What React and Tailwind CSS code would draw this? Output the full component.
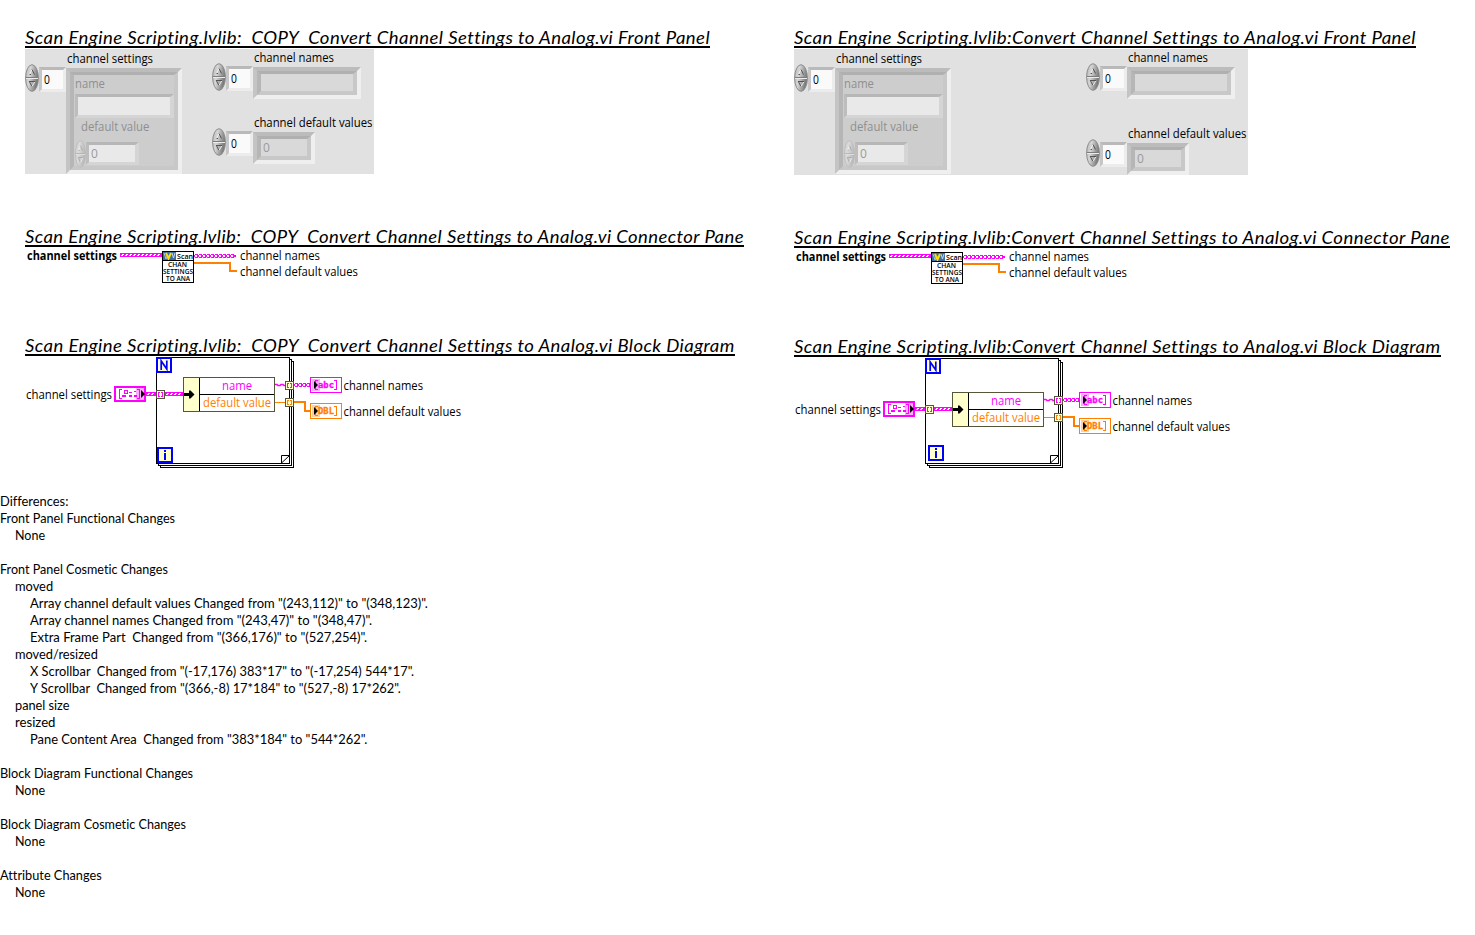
import { useLayoutEffect, useRef } from "react";

const SANS = "font-['Open_Sans','Noto_Sans',sans-serif]";
const LATO = "font-['Lato',sans-serif]";

// Text squeezed or stretched horizontally to an exact width.
function Fit({ w, className = "", children }) {
  const ref = useRef(null);
  useLayoutEffect(() => {
    const el = ref.current;
    el.style.transform = "none";
    el.style.transform = `scaleX(${w / el.offsetWidth})`;
  }, [w]);
  return (
    <span
      ref={ref}
      className={`inline-block w-max origin-left whitespace-pre [font-variant-ligatures:none] ${className}`}
    >
      {children}
    </span>
  );
}

function Heading({ w, children }) {
  return (
    <h2
      className={`h-5 overflow-hidden border-b-2 border-black text-[18px] italic leading-[19px] tracking-[0.4px] text-black ${LATO}`}
      style={{ width: w }}
    >
      <Fit w={w}>{children}</Fit>
    </h2>
  );
}

function Label({ w, className = "", children }) {
  return (
    <div className={`text-[12px] ${SANS} ${className}`}>
      <Fit w={w}>{children}</Fit>
    </div>
  );
}

function Spinner({ className = "", dim }) {
  const id = dim ? "spin-dim" : "spin";
  const dark = dim ? "#a8a8a8" : "#555";
  return (
    <svg
      className={`h-7 shrink-0 ${className}`}
      viewBox="0 0 14 28"
      preserveAspectRatio="none"
    >
      <defs>
        <linearGradient id={id} x1="0" y1="0" x2="1" y2="0.3">
          <stop offset="0" stopColor={dim ? "#d2d2d2" : "#b4b4b4"} />
          <stop offset="0.4" stopColor={dim ? "#dadada" : "#d6d6d6"} />
          <stop offset="1" stopColor={dim ? "#b8b8b8" : "#777"} />
        </linearGradient>
      </defs>
      <ellipse cx="7" cy="14" rx="6.4" ry="13.3" fill={`url(#${id})`} stroke={dim ? "#bdbdbd" : "#8c8c8c"} strokeWidth="1" />
      <path d="M1 13.5h12" stroke={dim ? "#b4b4b4" : "#7c7c7c"} />
      <path d="M1 14.5h12" stroke={dim ? "#dedede" : "#ececec"} />
      <path d="M4.500 10.500L7 5.500" stroke="#eee" fill="none" />
      <path d="M7 5.500l2.500 5M4.500 10.500h1.500" stroke={dark} fill="none" />
      <path d="M4 17.500h6M4.300 17.500L7 22.500" stroke={dark} fill="none" />
      <path d="M9.700 18L7 22.500" stroke="#eee" fill="none" />
    </svg>
  );
}

function IndexBox({ className }) {
  return (
    <div className={`h-[25px] w-[27px] shrink-0 border-[3px] border-b-[#ececec] border-l-[#c6c6c6] border-r-[#ececec] border-t-[#b9b9b9] bg-[#fafafa] pl-0.5 ${className}`}>
      <Label w={6} className="leading-[19px] text-black">0</Label>
    </div>
  );
}

// Sunken array shell: an outer bevel round a second, darker one.
function ArrayShell({ className, inner, children }) {
  return (
    <div className={`flex border-4 border-b-[#efefef] border-l-[#c4c4c4] border-r-[#efefef] border-t-[#bcbcbc] ${className}`}>
      <div className={`flex-1 border-4 border-t-[3px] border-b-[#c8c8c8] border-l-[#b6b6b6] border-r-[#c8c8c8] border-t-[#b0b0b0] pl-px ${inner}`}>
        {children}
      </div>
    </div>
  );
}

function OutputArray({ shell, label, w, value }) {
  return (
    <div className="flex h-[50px] items-start">
      <Spinner className="mt-3.5 w-3.5" />
      <IndexBox className="mt-[17px]" />
      <div className="flex flex-col">
        <Label w={w} className="h-[18px] pl-px leading-[18px] text-black">{label}</Label>
        <ArrayShell className={`h-8 ${shell}`} inner="bg-[#d9d9d9]">
          {value && <Label w={7} className="pl-px leading-[17px] text-[#9a9a9a]">{value}</Label>}
        </ArrayShell>
      </div>
    </div>
  );
}

function InputArray() {
  return (
    <div className="flex w-[187px] shrink-0 items-start">
      <Spinner className="mt-[15px] w-3.5" />
      <IndexBox className="mt-[18px]" />
      <div className="flex flex-col">
        <Label w={86} className="h-[19px] pl-px leading-5 text-black">channel settings</Label>
        <ArrayShell className="h-[106px] w-[116px]" inner="flex flex-col bg-[#cdcdcd]">
          <Label w={30} className="h-[19px] leading-[18px] text-[#8f8f8f]">name</Label>
          <div className="h-6 w-[99px] shrink-0 border-[3px] border-r-4 border-b-[#d5d5d5] border-l-[#bdbdbd] border-r-[#d5d5d5] border-t-[#b7b7b7] bg-[#e9e9e9]" />
          <Label w={68} className="h-[22px] shrink-0 pl-1.5 leading-[18px] text-[#8f8f8f]">default value</Label>
          <div className="flex h-[25px] items-start">
            <Spinner dim className="w-[11px]" />
            <div className="mt-0.5 h-[23px] w-[53px] border-[3px] border-r-4 border-b-[#d5d5d5] border-l-[#bdbdbd] border-r-[#d5d5d5] border-t-[#b7b7b7] bg-[#e9e9e9] pl-0.5">
              <Label w={7} className="leading-[17px] text-[#9a9a9a]">0</Label>
            </div>
          </div>
        </ArrayShell>
      </div>
    </div>
  );
}

function FrontPanel({ className, outputs }) {
  return (
    <div className={`mt-px flex bg-[#e1e1e1] ${className}`}>
      <InputArray />
      <div className={`flex shrink-0 flex-col ${outputs}`}>
        <OutputArray shell="w-[108px]" label="channel names" w={80} />
        <OutputArray shell="w-[62px]" label="channel default values" w={118} value="0" />
      </div>
    </div>
  );
}

function T({ x, y, w, fill = "#000", size = 12, weight = 400, children }) {
  return (
    <text x={x} y={y} textLength={w} lengthAdjust="spacingAndGlyphs" fill={fill} fontSize={size} fontWeight={weight} className={SANS}>
      {children}
    </text>
  );
}

// Braided cluster wire, 4px high.
function ClusterWire({ x1, x2, y }) {
  const n = Math.floor((x2 - x1) / 4);
  return (
    <g shapeRendering="crispEdges">
      <rect x={x1} y={y} width={x2 - x1} height="4" fill="#ff00ff" />
      {Array.from({ length: n }, (_, i) => (
        <g key={i} fill="#fff">
          <rect x={x1 + i * 4 + 1} y={y + 2} width="2" height="1" />
          <rect x={x1 + i * 4 + 2} y={y + 1} width="2" height="1" />
        </g>
      ))}
    </g>
  );
}

// Linked-chain wire for string arrays.
function ChainWire({ x1, x2, y }) {
  const n = Math.floor((x2 - x1) / 4);
  return (
    <g shapeRendering="crispEdges" fill="#ff00ff">
      {Array.from({ length: n }, (_, i) => (
        <g key={i}>
          <rect x={x1 + i * 4} y={y} width="4" height="4" />
          <rect x={x1 + i * 4 + 1} y={y + 1} width="2" height="2" fill="#fff" />
          <rect x={x1 + i * 4} y={y} width="1" height="1" fill="#fff" />
          <rect x={x1 + i * 4} y={y + 3} width="1" height="1" fill="#fff" />
        </g>
      ))}
      <rect x={x1 + n * 4} y={y + 1} width={x2 - x1 - n * 4} height="2" />
    </g>
  );
}

function ConnectorPane() {
  return (
    <svg className="block" width="400" height="36" viewBox="25 247 400 36">
      <T x="27" y="260" w="90" weight="700">channel settings</T>
      <ClusterWire x1={120} x2={162} y={253} />
      <ChainWire x1={194} x2={236} y={254} />
      <path d="M194 263H230V271H237" stroke="#ff8000" strokeWidth="2" fill="none" shapeRendering="crispEdges" />
      <rect x="162.5" y="251.5" width="31" height="31" fill="#fff" stroke="#000" />
      <rect x="163" y="252" width="13" height="8" fill="#3f6ea5" />
      <path d="M164 253l2 6 2-4" stroke="#a9c3dc" fill="none" />
      <path d="M166 253l2.500 5.500 2.500-5.500" stroke="#ffe000" strokeWidth="2" fill="none" />
      <path d="M172 253l1.500 5 1.500-5" stroke="#c8d8e8" fill="none" />
      <rect x="163" y="260" width="30" height="1" fill="#000" />
      <T x="177" y="259" w="16" size="7" weight="600">Scan</T>
      <T x="168" y="267" w="19" size="6.5" weight="600">CHAN</T>
      <T x="163" y="274" w="30" size="6.5" weight="600">SETTINGS</T>
      <T x="166" y="281" w="24" size="6.5" weight="600">TO ANA</T>
      <T x="240" y="260" w="80">channel names</T>
      <T x="240" y="276" w="118">channel default values</T>
    </svg>
  );
}

function Tunnel({ x, y, color }) {
  return (
    <g shapeRendering="crispEdges" fill="none">
      <rect x={x + 0.5} y={y + 0.5} width="8" height="8" fill="#ffffcc" stroke="#55553a" />
      <path d={`M${x + 4} ${y + 2.5}h-1.500v4h1.500M${x + 5} ${y + 2.5}h1.500v4h-1.500`} stroke={color} />
    </g>
  );
}

function LoopBox({ x, y, children }) {
  return (
    <g>
      <rect x={x + 1} y={y + 1} width="14" height="14" fill="#ffffcc" stroke="#0000ff" strokeWidth="2" shapeRendering="crispEdges" />
      {children}
    </g>
  );
}

function Indicator({ y, color, tint, text }) {
  return (
    <g>
      <rect x="310.5" y={y + 0.5} width="31" height="15" fill="#fff" stroke={color} />
      <rect x="312" y={y + 2} width="8" height="12" fill={tint} />
      <path d={`M318 ${y + 3.5}h-2.500v9h2.500M334 ${y + 3.5}h2.500v9h-2.500`} stroke={color} fill="none" shapeRendering="crispEdges" />
      <text x="318" y={y + 11} textLength="16" lengthAdjust="spacingAndGlyphs" fill={color} stroke={color} strokeWidth="0.3" fontSize="8.5" fontWeight="700" className="font-['DejaVu_Sans_Mono',monospace]">{text}</text>
      <path d={`M314 ${y + 4}v8l4-4z`} fill="#000" />
    </g>
  );
}

function BlockDiagram({ shift, frameHeight, loopBottom, indexX, indexY }) {
  const b = loopBottom;
  return (
    <svg className="block" width="500" height="137" viewBox="25 356 500 137">
      <g fill="#fff" stroke="#000" shapeRendering="crispEdges">
        <rect x="160.5" y="361.5" width="133" height={frameHeight} />
        <rect x="158.5" y="359.5" width="133" height={frameHeight} />
        <rect x="156.5" y="357.5" width="133" height={frameHeight} />
      </g>
      <path d={`M281.500 ${b}v-7.500h8M281.500 ${b}l8-7.500`} fill="none" stroke="#000" />
      <LoopBox x={156} y={357}>
        <path d="M161.200 370v-9l5.600 8v-8.500" stroke="#0000ff" strokeWidth="1.700" fill="none" />
      </LoopBox>
      <LoopBox x={indexX} y={indexY}>
        <path d={`M${indexX + 8} ${indexY + 3}v2M${indexX + 8} ${indexY + 6}v7`} stroke="#0000ff" strokeWidth="2" />
      </LoopBox>
      <g transform={`translate(0 ${shift})`}>
        <T x="26" y="399" w="86">channel settings</T>
        <rect x="115" y="387" width="30" height="14" fill="#fff" stroke="#ff00ff" strokeWidth="2" />
        <rect x="136" y="388" width="8" height="12" fill="#ffa8ff" />
        <g stroke="#ff00ff" fill="none" shapeRendering="crispEdges">
          <path d="M122 389.500h-2.500v9h2.500M137 389.500h2.500v9h-2.500" />
          <rect x="124.5" y="390.5" width="3" height="3" />
          <path d="M122 395.500h4M122 396.500h4M129 392.500h3M129 395.500h3M129 396.500h3M134 391.500h2M134 395.500h3M134 396.500h3" />
        </g>
        <path d="M141 390v8l4-4z" fill="#000" />
        <ClusterWire x1={146} x2={156} y={392} />
        <ClusterWire x1={165} x2={184} y={392} />
        <Tunnel x={156} y={390} color="#ff00ff" />

        <rect x="183.5" y="377.5" width="91" height="34" fill="#fff" stroke="#55553a" />
        <rect x="184" y="378" width="15" height="33" fill="#ffffcc" />
        <path d="M199.500 378v33M199 394.500h75" stroke="#000" shapeRendering="crispEdges" />
        <path d="M184 394.500h7" stroke="#000" strokeWidth="3" shapeRendering="crispEdges" />
        <path d="M189 390.500h1.500l4 4-4 4h-1.500z" fill="#000" />
        <T x="222" y="390" w="30" fill="#ff00ff">name</T>
        <T x="203" y="407" w="68" fill="#ff8000">default value</T>

        <path d="M275 384.500h2l1 1h2l1-1h2l1 1h2" stroke="#ff00ff" strokeWidth="1.500" fill="none" />
        <path d="M275 402.500h10" stroke="#ff8000" shapeRendering="crispEdges" />
        <ChainWire x1={294} x2={310} y={383} />
        <path d="M294 402H305V411H310" stroke="#ff8000" strokeWidth="2" fill="none" shapeRendering="crispEdges" />
        <Tunnel x={285} y={381} color="#ff00ff" />
        <Tunnel x={285} y={398} color="#ff8000" />
        <Indicator y={377} color="#ff00ff" tint="#ffa8ff" text="abc" />
        <Indicator y={403} color="#ff8000" tint="#ffd0a0" text="DBL" />
        <T x="343.5" y="390" w="79.5">channel names</T>
        <T x="343.5" y="416" w="117.5">channel default values</T>
      </g>
    </svg>
  );
}

// Each row: indent level, text width, text.
const DIFFERENCES = [
  [0, 68, "Differences:"],
  [0, 175, "Front Panel Functional Changes"],
  [1, 30, "None"],
  null,
  [0, 168, "Front Panel Cosmetic Changes"],
  [1, 38, "moved"],
  [2, 398, 'Array channel default values Changed from "(243,112)" to "(348,123)".'],
  [2, 342, 'Array channel names Changed from "(243,47)" to "(348,47)".'],
  [2, 337, 'Extra Frame Part  Changed from "(366,176)" to "(527,254)".'],
  [1, 83, "moved/resized"],
  [2, 384.500, 'X Scrollbar  Changed from "(-17,176) 383*17" to "(-17,254) 544*17".'],
  [2, 370.500, 'Y Scrollbar  Changed from "(366,-8) 17*184" to "(527,-8) 17*262".'],
  [1, 55, "panel size"],
  [1, 40, "resized"],
  [2, 337, 'Pane Content Area  Changed from "383*184" to "544*262".'],
  null,
  [0, 193, "Block Diagram Functional Changes"],
  [1, 30, "None"],
  null,
  [0, 186, "Block Diagram Cosmetic Changes"],
  [1, 30, "None"],
  null,
  [0, 102, "Attribute Changes"],
  [1, 30, "None"],
];
const INDENT = ["pl-0", "pl-[15px]", "pl-[30px]"];

export default function App() {
  return (
    <main className="flex h-[935px] w-[1475px] flex-col overflow-hidden bg-white">
      <div className="grid h-[493px] shrink-0 grid-cols-[769px_706px] pt-7">
        <section className="flex flex-col gap-[53px] pl-[25px]">
          <div>
            <Heading w={685}>{"Scan Engine Scripting.lvlib:  COPY  Convert Channel Settings to Analog.vi Front Panel"}</Heading>
            <FrontPanel className="h-[125px] w-[349px]" outputs="gap-[15px]" />
          </div>
          <div>
            <Heading w={719}>{"Scan Engine Scripting.lvlib:  COPY  Convert Channel Settings to Analog.vi Connector Pane"}</Heading>
            <ConnectorPane />
          </div>
          <div>
            <Heading w={710}>{"Scan Engine Scripting.lvlib:  COPY  Convert Channel Settings to Analog.vi Block Diagram"}</Heading>
            <BlockDiagram shift={0} frameHeight={106} loopBottom={463} indexX={157} indexY={447} />
          </div>
        </section>
        <section className="flex flex-col gap-[53px] pl-[25px]">
          <div>
            <Heading w={622}>Scan Engine Scripting.lvlib:Convert Channel Settings to Analog.vi Front Panel</Heading>
            <FrontPanel className="h-[126px] w-[454px]" outputs="gap-[26px] pl-[105px]" />
          </div>
          <div>
            <Heading w={656}>Scan Engine Scripting.lvlib:Convert Channel Settings to Analog.vi Connector Pane</Heading>
            <ConnectorPane />
          </div>
          <div>
            <Heading w={647}>Scan Engine Scripting.lvlib:Convert Channel Settings to Analog.vi Block Diagram</Heading>
            <BlockDiagram shift={14} frameHeight={105} loopBottom={462} indexX={159} indexY={444} />
          </div>
        </section>
      </div>
      <div className={`flex flex-col text-[12.5px] leading-[17px] text-black ${LATO}`}>
        {DIFFERENCES.map((row, i) =>
          row ? (
            <div key={i} className={`h-[17px] ${INDENT[row[0]]}`}>
              <Fit w={row[1]}>{row[2]}</Fit>
            </div>
          ) : (
            <div key={i} className="h-[17px]" />
          )
        )}
      </div>
    </main>
  );
}
